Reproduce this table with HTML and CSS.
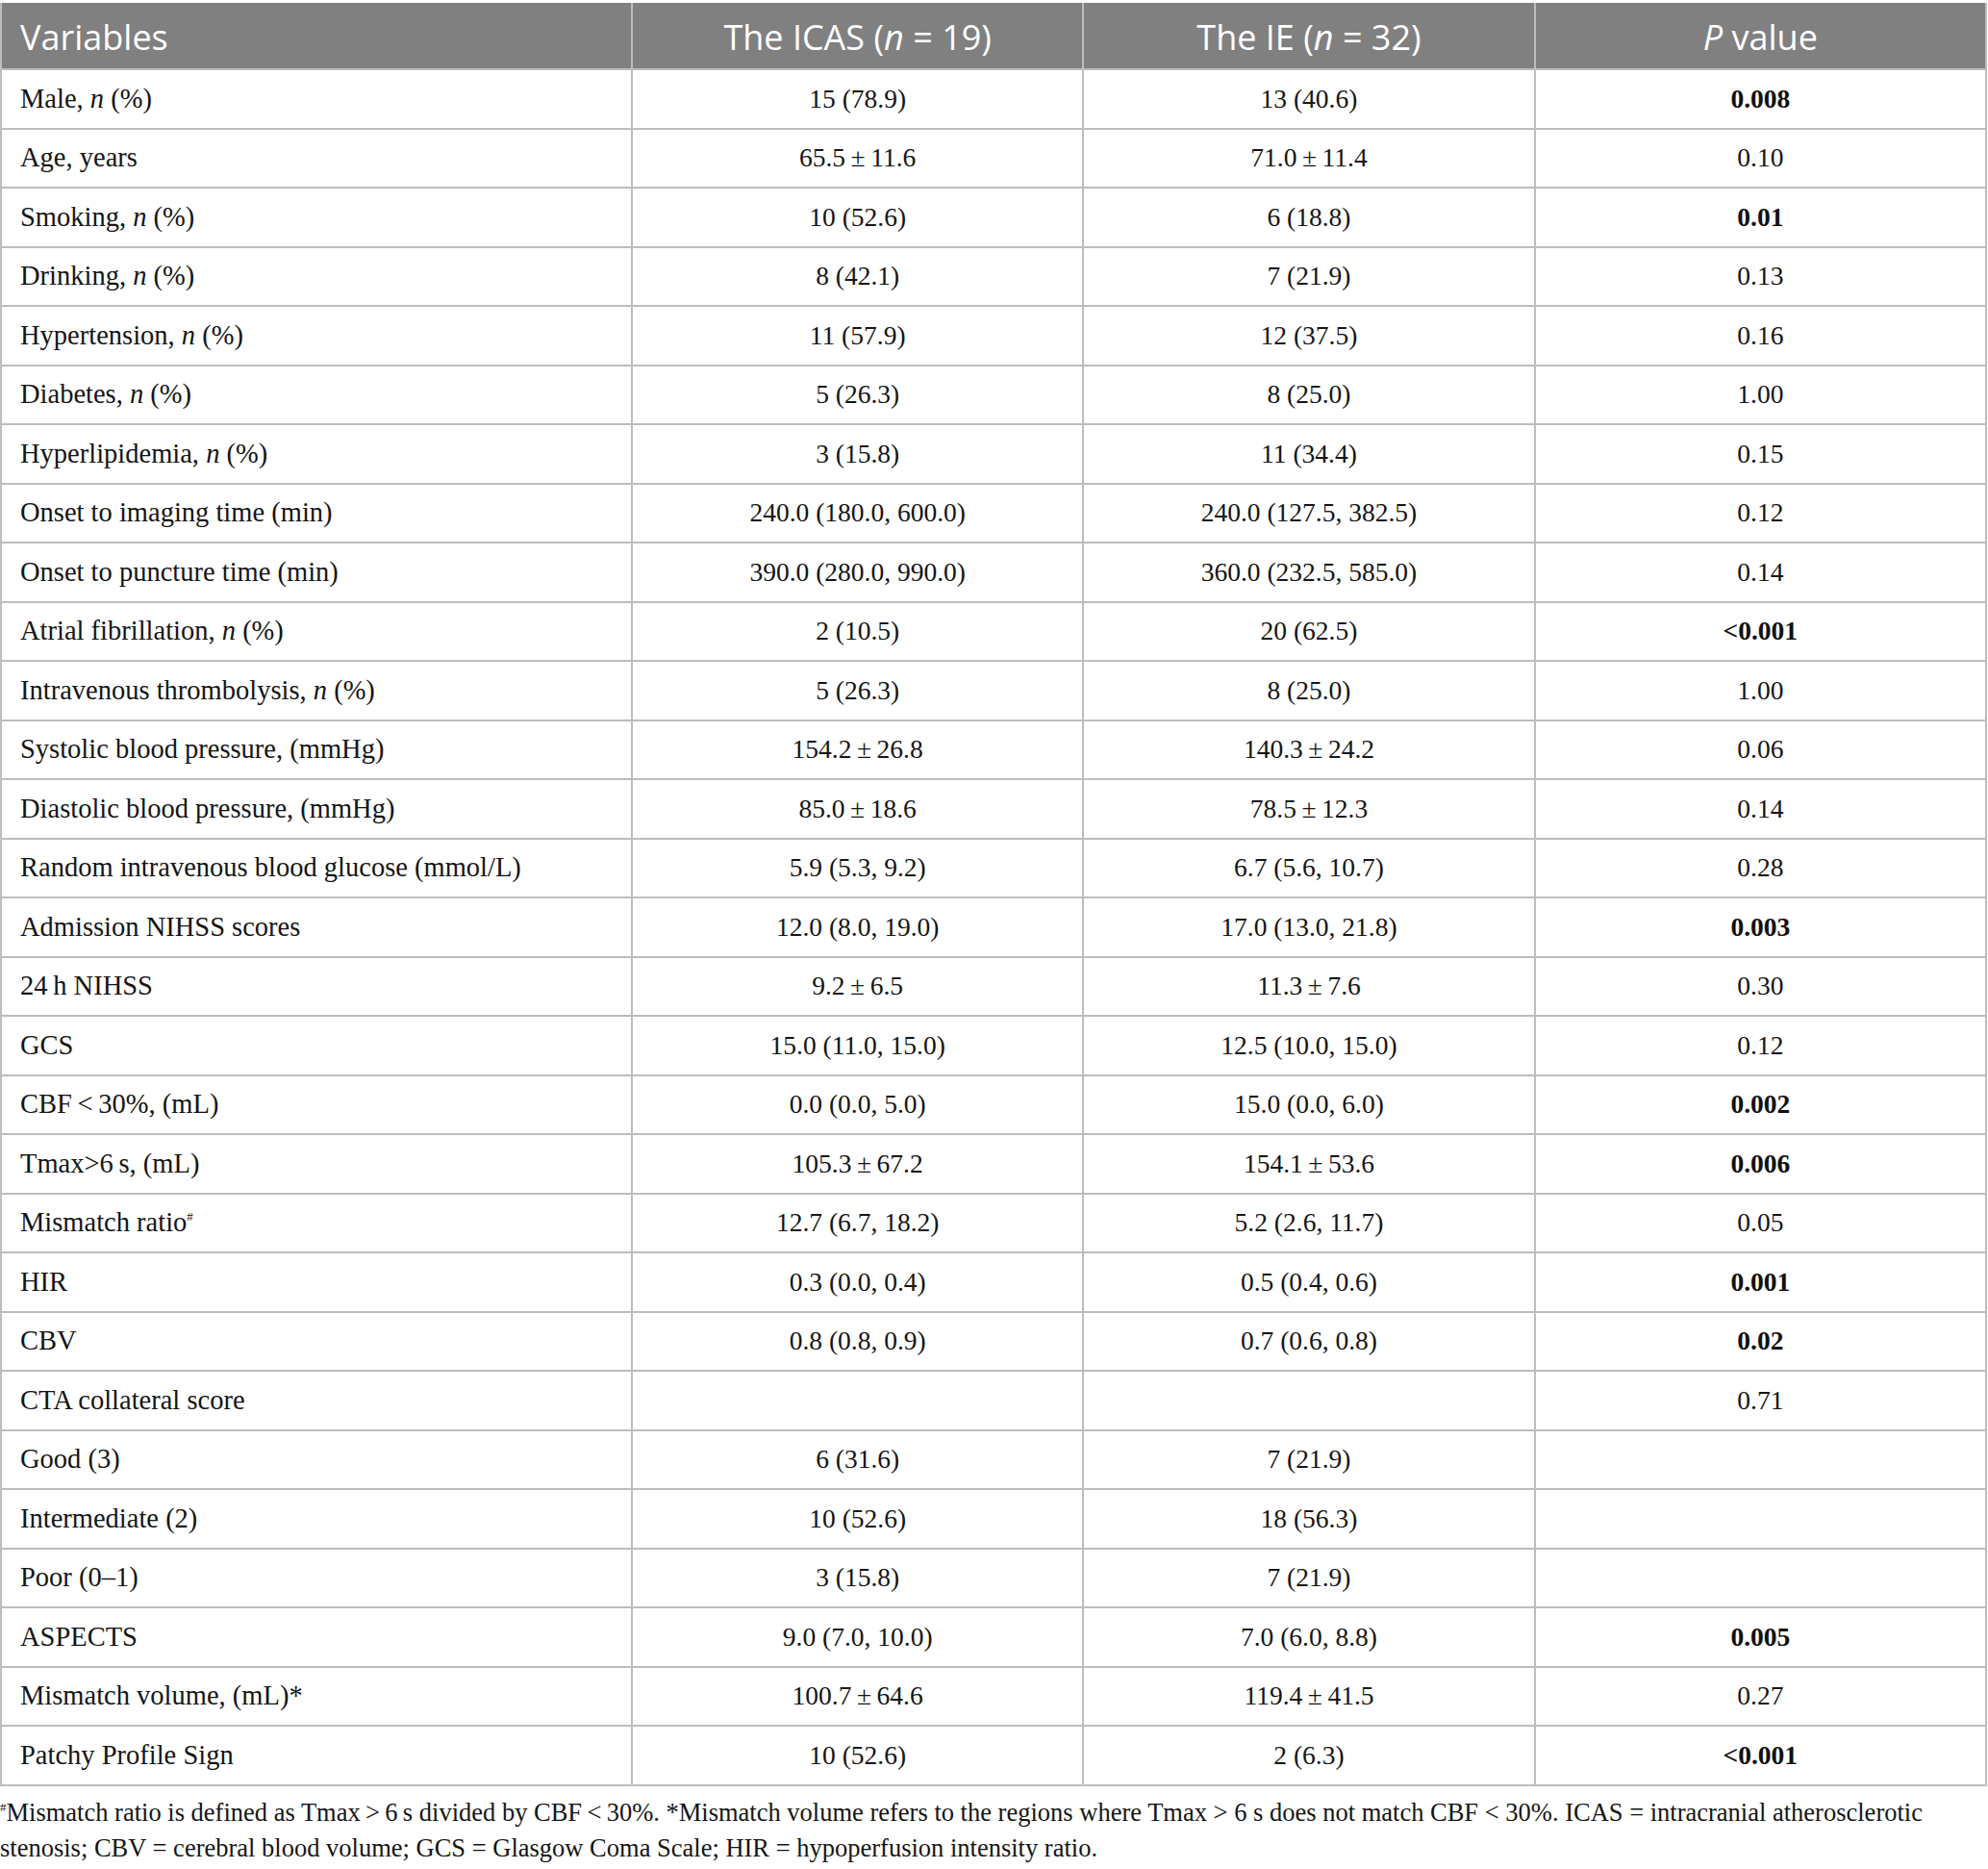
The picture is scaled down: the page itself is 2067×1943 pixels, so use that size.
FILE: index.html
```html
<!DOCTYPE html>
<html lang="en">
<head>
<meta charset="UTF-8">
<title>Baseline characteristics</title>
<link rel="stylesheet" href="styles.css">
</head>
<body>

<table class="data-table">
    <thead>
        <tr>
            <th class="col-var">Variables</th>
            <th>The ICAS (<i>n</i> = 19)</th>
            <th>The IE (<i>n</i> = 32)</th>
            <th><i>P</i> value</th>
        </tr>
    </thead>
    <tbody>
        <tr><td>Male, <i>n</i> (%)</td><td>15 (78.9)</td><td>13 (40.6)</td><td><b>0.008</b></td></tr>
        <tr><td>Age, years</td><td>65.5&#8201;±&#8201;11.6</td><td>71.0&#8201;±&#8201;11.4</td><td>0.10</td></tr>
        <tr><td>Smoking, <i>n</i> (%)</td><td>10 (52.6)</td><td>6 (18.8)</td><td><b>0.01</b></td></tr>
        <tr><td>Drinking, <i>n</i> (%)</td><td>8 (42.1)</td><td>7 (21.9)</td><td>0.13</td></tr>
        <tr><td>Hypertension, <i>n</i> (%)</td><td>11 (57.9)</td><td>12 (37.5)</td><td>0.16</td></tr>
        <tr><td>Diabetes, <i>n</i> (%)</td><td>5 (26.3)</td><td>8 (25.0)</td><td>1.00</td></tr>
        <tr><td>Hyperlipidemia, <i>n</i> (%)</td><td>3 (15.8)</td><td>11 (34.4)</td><td>0.15</td></tr>
        <tr><td>Onset to imaging time (min)</td><td>240.0 (180.0, 600.0)</td><td>240.0 (127.5, 382.5)</td><td>0.12</td></tr>
        <tr><td>Onset to puncture time (min)</td><td>390.0 (280.0, 990.0)</td><td>360.0 (232.5, 585.0)</td><td>0.14</td></tr>
        <tr><td>Atrial fibrillation, <i>n</i> (%)</td><td>2 (10.5)</td><td>20 (62.5)</td><td><b>&lt;0.001</b></td></tr>
        <tr><td>Intravenous thrombolysis, <i>n</i> (%)</td><td>5 (26.3)</td><td>8 (25.0)</td><td>1.00</td></tr>
        <tr><td>Systolic blood pressure, (mmHg)</td><td>154.2&#8201;±&#8201;26.8</td><td>140.3&#8201;±&#8201;24.2</td><td>0.06</td></tr>
        <tr><td>Diastolic blood pressure, (mmHg)</td><td>85.0&#8201;±&#8201;18.6</td><td>78.5&#8201;±&#8201;12.3</td><td>0.14</td></tr>
        <tr><td>Random intravenous blood glucose (mmol/L)</td><td>5.9 (5.3, 9.2)</td><td>6.7 (5.6, 10.7)</td><td>0.28</td></tr>
        <tr><td>Admission NIHSS scores</td><td>12.0 (8.0, 19.0)</td><td>17.0 (13.0, 21.8)</td><td><b>0.003</b></td></tr>
        <tr><td>24&#8201;h NIHSS</td><td>9.2&#8201;±&#8201;6.5</td><td>11.3&#8201;±&#8201;7.6</td><td>0.30</td></tr>
        <tr><td>GCS</td><td>15.0 (11.0, 15.0)</td><td>12.5 (10.0, 15.0)</td><td>0.12</td></tr>
        <tr><td>CBF&#8201;&lt;&#8201;30%, (mL)</td><td>0.0 (0.0, 5.0)</td><td>15.0 (0.0, 6.0)</td><td><b>0.002</b></td></tr>
        <tr><td>Tmax&gt;6&#8201;s, (mL)</td><td>105.3&#8201;±&#8201;67.2</td><td>154.1&#8201;±&#8201;53.6</td><td><b>0.006</b></td></tr>
        <tr><td>Mismatch ratio<sup>#</sup></td><td>12.7 (6.7, 18.2)</td><td>5.2 (2.6, 11.7)</td><td>0.05</td></tr>
        <tr><td>HIR</td><td>0.3 (0.0, 0.4)</td><td>0.5 (0.4, 0.6)</td><td><b>0.001</b></td></tr>
        <tr><td>CBV</td><td>0.8 (0.8, 0.9)</td><td>0.7 (0.6, 0.8)</td><td><b>0.02</b></td></tr>
        <tr><td>CTA collateral score</td><td></td><td></td><td>0.71</td></tr>
        <tr><td>Good (3)</td><td>6 (31.6)</td><td>7 (21.9)</td><td></td></tr>
        <tr><td>Intermediate (2)</td><td>10 (52.6)</td><td>18 (56.3)</td><td></td></tr>
        <tr><td>Poor (0–1)</td><td>3 (15.8)</td><td>7 (21.9)</td><td></td></tr>
        <tr><td>ASPECTS</td><td>9.0 (7.0, 10.0)</td><td>7.0 (6.0, 8.8)</td><td><b>0.005</b></td></tr>
        <tr><td>Mismatch volume, (mL)*</td><td>100.7&#8201;±&#8201;64.6</td><td>119.4&#8201;±&#8201;41.5</td><td>0.27</td></tr>
        <tr><td>Patchy Profile Sign</td><td>10 (52.6)</td><td>2 (6.3)</td><td><b>&lt;0.001</b></td></tr>
    </tbody>
</table>

<p class="footnote"><sup>#</sup>Mismatch ratio is defined as Tmax&#8201;&gt;&#8201;6&#8201;s divided by CBF&#8201;&lt;&#8201;30%. *Mismatch volume refers to the regions where Tmax &gt; 6 s does not match CBF &lt; 30%. ICAS = intracranial atherosclerotic stenosis; CBV = cerebral blood volume; GCS = Glasgow Coma Scale; HIR = hypoperfusion intensity ratio.</p>

</body>
</html>
```

FILE: styles.css
```css
body {
    margin: 0;
    padding: 3px 1px 0 0;
    background: #fff;
    color: #151515;
    font-family: "Liberation Serif", "Times New Roman", serif;
}
.data-table {
    width: 2066px;
    border-collapse: collapse;
    table-layout: fixed;
    font-size: 27.5px;
}
.data-table th {
    height: 65px;
    padding: 3px 19px 0;
    background-color: #808080;
    color: #fff;
    font-family: "Open Sans", "Noto Sans", sans-serif;
    font-weight: 400;
    font-size: 36px;
    text-align: center;
    border: 2px solid #bdbdbd;
    border-top: 0;
}
.data-table th:first-child {
    width: 616px;
    text-align: left;
}
.data-table td {
    height: 59.5px;
    padding: 0 19px;
    text-align: center;
    border: 2px solid #bdbdbd;
    vertical-align: middle;
}
.data-table td:first-child {
    text-align: left;
    font-size: 28.5px;
}
.data-table b {
    font-weight: 700;
    color: #111;
}
sup {
    font-size: 13px;
    vertical-align: 11px;
    line-height: 0;
}
.footnote {
    width: 2060px;
    margin: 9px 0 0 0;
    font-size: 26.5px;
    line-height: 37px;
}
.footnote sup {
    vertical-align: 10px;
}
```
